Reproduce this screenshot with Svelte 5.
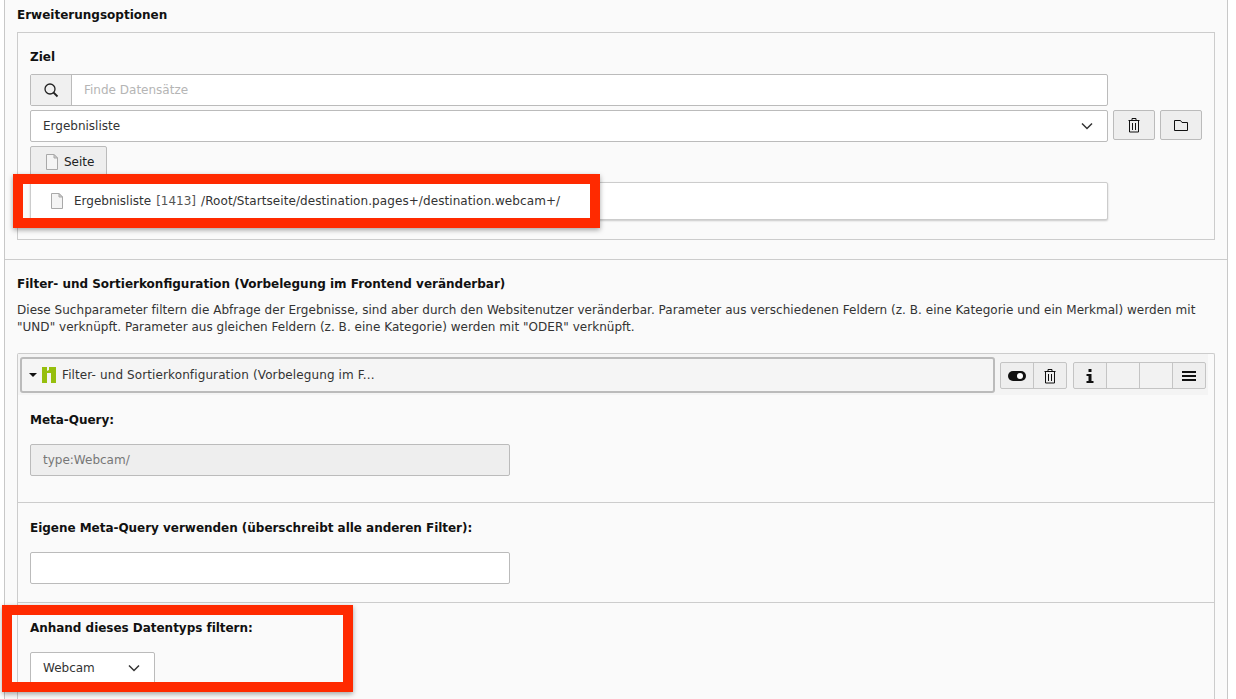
<script>
	const actions = ['info', 'blank', 'blank', 'menu'];
</script>

{#snippet fileIcon()}
	<svg class="file-icon" viewBox="0 0 14 16" width="14" height="16">
		<path d="M1.500 .5h7.500l3.500 3.500v11.500h-11z" fill="#f4f4f4" stroke="#a9a9a9" />
		<path d="M9 .5v3.500h3.500z" fill="#d0d0d0" stroke="#a9a9a9" />
	</svg>
{/snippet}

{#snippet trashIcon()}
	<svg viewBox="0 0 16 16" width="16" height="16" fill="none" stroke="#111" stroke-width="1">
		<path d="M2.500 3.500h11M6 3.500v-2h4v2M3.500 3.500v11.500h9v-11.500M6.500 6v7M9.500 6v7" />
	</svg>
{/snippet}

{#snippet chevron()}
	<svg class="chevron" viewBox="0 0 12 8" width="12" height="8" fill="none" stroke="#333" stroke-width="1.500">
		<path d="M1 1.500l5 5 5-5" />
	</svg>
{/snippet}

<main class="page">
	<section class="panel">
		<h2 class="first">Erweiterungsoptionen</h2>
		<div class="box">
			<h3>Ziel</h3>
			<div class="search">
				<span class="search-btn">
					<svg viewBox="0 0 16 16" width="16" height="16" fill="none" stroke="#222" stroke-width="1.300">
						<circle cx="7" cy="7" r="5" />
						<path d="M10.500 10.500l4 4" stroke-width="1.800" />
					</svg>
				</span>
				<span class="search-input">Finde Datensätze</span>
			</div>
			<div class="select-row">
				<div class="select wide">Ergebnisliste {@render chevron()}</div>
				<button class="btn">{@render trashIcon()}</button>
				<button class="btn" aria-label="Ordner">
					<svg viewBox="0 0 16 16" width="16" height="16" fill="none" stroke="#111">
						<path d="M1.500 3.500h6l1.500 2h5.500v8h-13z" />
					</svg>
				</button>
			</div>
			<button class="seite">{@render fileIcon()} Seite</button>
			<div class="record">
				{@render fileIcon()}
				<span class="title">Ergebnisliste</span>
				<span class="uid">[1413]</span>
				<span class="path">/Root/Startseite/destination.pages+/destination.webcam+/</span>
			</div>
		</div>

		<div class="divider"></div>

		<h2>Filter- und Sortierkonfiguration (Vorbelegung im Frontend veränderbar)</h2>
		<p>
			Diese Suchparameter filtern die Abfrage der Ergebnisse, sind aber durch den Websitenutzer veränderbar. Parameter aus verschiedenen Feldern (z. B. eine Kategorie und ein Merkmal) werden mit "UND" verknüpft. Parameter aus gleichen Feldern (z. B. eine Kategorie) werden mit "ODER" verknüpft.
		</p>

		<div class="inner">
			<div class="head">
				<div class="head-title">
					<span class="caret"></span>
					<svg class="logo" viewBox="0 0 14 16" width="14" height="16">
						<path d="M0 0h5v4l2-1v-3h7v16h-5v-10h-4v10h-5z" fill="#96bf0d" />
					</svg>
					<span class="head-text">Filter- und Sortierkonfiguration (Vorbelegung im F...</span>
				</div>
				<div class="group">
					<span class="cell">
						<svg viewBox="0 0 18 12" width="18" height="12">
							<rect x="0" y="1" width="18" height="10" rx="5" fill="#111" />
							<circle cx="12" cy="6" r="3" fill="#fff" />
						</svg>
					</span>
					<span class="cell">{@render trashIcon()}</span>
				</div>
				<div class="group second">
					{#each actions as action}
						<span class="cell" class:blank={action === 'blank'}>
							{#if action === 'info'}
								<svg viewBox="0 0 10 14" width="10" height="14" fill="#111">
									<path d="M3.500 0h3v3h-3zM1.500 5h5v7h2v2h-7v-2h2v-5h-2z" />
								</svg>
							{:else if action === 'menu'}
								<svg viewBox="0 0 14 10" width="14" height="10" fill="#111">
									<path d="M0 0h14v2h-14zM0 4h14v2h-14zM0 8h14v2h-14z" />
								</svg>
							{/if}
						</span>
					{/each}
				</div>
			</div>

			<div class="field first-field">
				<label for="meta">Meta-Query:</label>
				<input id="meta" class="input readonly" value="type:Webcam/" readonly />
			</div>
			<div class="field">
				<label for="own">Eigene Meta-Query verwenden (überschreibt alle anderen Filter):</label>
				<input id="own" class="input" />
			</div>
			<div class="field last">
				<span class="label">Anhand dieses Datentyps filtern:</span>
				<div class="select small">Webcam {@render chevron()}</div>
			</div>
		</div>
	</section>

	<div class="mark mark-record"></div>
	<div class="mark mark-type"></div>
</main>

<style>
	:global(body) {
		background: #fff;
		overflow: hidden;
	}

	.page {
		position: relative;
		height: 699px;
		overflow: hidden;
		font-family: "DejaVu Sans", Verdana, sans-serif;
		font-size: 12px;
		color: #222;
	}

	.panel {
		margin: 0 8px 0 4px;
		height: 760px;
		box-sizing: border-box;
		padding: 0 12px;
		background: #fafafa;
		border-left: 1px solid #c8c8c8;
		border-right: 1px solid #c8c8c8;
	}

	h2,
	h3,
	label,
	.label {
		margin: 0;
		font-size: 12px;
		line-height: 16px;
		font-weight: 700;
		color: #111;
		display: block;
	}

	label,
	.label {
		letter-spacing: -0.03px;
	}

	h2 {
		padding-top: 16px;
	}

	h2.first {
		padding-top: 7px;
	}

	.box {
		margin-top: 9px;
		height: 208px;
		box-sizing: border-box;
		padding: 16px 12px 0;
		border: 1px solid #ccc;
	}

	.search {
		display: flex;
		width: 1078px;
		height: 32px;
		margin-top: 9px;
		box-sizing: border-box;
		border: 1px solid #bbb;
		border-radius: 2px;
		background: #fff;
	}

	.search-btn {
		width: 40px;
		display: flex;
		align-items: center;
		justify-content: center;
		background: #f0f0f0;
		border-right: 1px solid #bbb;
	}

	.search-input {
		padding-left: 12px;
		line-height: 30px;
		color: #b5b5b5;
	}

	.select-row {
		display: flex;
		align-items: flex-start;
		gap: 5px;
		margin-top: 4px;
	}

	.select {
		position: relative;
		box-sizing: border-box;
		height: 32px;
		padding-left: 12px;
		line-height: 30px;
		background: #fff;
		border: 1px solid #bbb;
		border-radius: 2px;
		color: #333;
	}

	.select.wide {
		flex: none;
		width: 1078px;
	}

	.select.small {
		width: 125px;
		margin-top: 16px;
	}

	.chevron {
		position: absolute;
		right: 14px;
		top: 11px;
	}

	.btn {
		flex: none;
		width: 42px;
		height: 30px;
		padding: 0;
		display: flex;
		align-items: center;
		justify-content: center;
		background: #eee;
		border: 1px solid #bbb;
		border-radius: 2px;
	}

	.seite {
		display: flex;
		align-items: center;
		gap: 5px;
		height: 30px;
		width: 77px;
		margin-top: 4px;
		padding: 1px 0 0 14px;
		box-sizing: border-box;
		font: inherit;
		color: #222;
		background: #eee;
		border: 1px solid #bbb;
		border-radius: 2px 2px 0 0;
	}

	.record {
		display: flex;
		align-items: center;
		width: 1078px;
		height: 38px;
		margin-top: 6px;
		padding: 0 0 1px 19px;
		box-sizing: border-box;
		background: #fff;
		border: 1px solid #ccc;
		border-radius: 2px;
		box-shadow: 0 1px 2px rgba(0, 0, 0, 0.2);
		color: #333;
	}

	.record .file-icon {
		margin-right: 10px;
	}

	.uid {
		margin: 0 5px 0 5px;
		color: #555;
	}

	.path {
		letter-spacing: 0.08px;
	}

	.divider {
		height: 1px;
		margin: 19px -12px 0;
		background: #ccc;
	}

	p {
		margin: 10px 0 0;
		line-height: 17px;
		letter-spacing: 0.03px;
		color: #333;
	}

	.inner {
		margin-top: 17px;
		height: 400px;
		border: 1px solid #ccc;
		border-bottom: 0;
		border-radius: 2px 2px 0 0;
	}

	.head {
		display: flex;
		align-items: flex-start;
		margin-right: 6px;
		padding: 3px 2px 2px;
		background: #f4f4f4;
	}

	.head-title {
		flex: none;
		display: flex;
		align-items: center;
		width: 975px;
		height: 36px;
		box-sizing: border-box;
		padding: 0 0 1px 7px;
		border: 2px solid #bbb;
		border-radius: 3px;
		background: #f5f5f5;
		color: #333;
	}

	.head-text {
		letter-spacing: 0.11px;
	}

	.caret {
		width: 0;
		height: 0;
		border-left: 4px solid transparent;
		border-right: 4px solid transparent;
		border-top: 4px solid #111;
		margin-right: 5px;
	}

	.logo {
		margin-right: 6px;
	}

	.group {
		flex: none;
		display: flex;
		margin: 5px 0 0 5px;
		height: 25px;
		border: 1px solid #c4c4c4;
		border-radius: 2px;
		background: #eee;
	}

	.group.second {
		margin-left: 6px;
	}

	.cell {
		width: 32px;
		display: flex;
		align-items: center;
		justify-content: center;
		border-left: 1px solid #c4c4c4;
	}

	.cell:first-child {
		border-left: 0;
	}

	.cell.blank {
		background: #f2f2f2;
	}

	.field {
		padding: 17px 12px 18px;
		border-bottom: 1px solid #ccc;
	}

	.first-field {
		padding-bottom: 26px;
	}

	.field.last {
		border-bottom: 0;
	}

	.input {
		display: block;
		width: 480px;
		height: 32px;
		margin-top: 16px;
		padding: 0 12px;
		box-sizing: border-box;
		font: inherit;
		background: #fff;
		border: 1px solid #bbb;
		border-radius: 2px;
	}

	.input.readonly {
		background: #eee;
		color: #777;
	}

	.mark {
		position: absolute;
		box-sizing: border-box;
		border: 10px solid #ff2a00;
		box-shadow: 0 2px 5px rgba(0, 0, 0, 0.35);
	}

	.mark-record {
		left: 13px;
		top: 174px;
		width: 587px;
		height: 54px;
	}

	.mark-type {
		left: 2px;
		top: 605px;
		width: 351px;
		height: 87px;
	}
</style>
